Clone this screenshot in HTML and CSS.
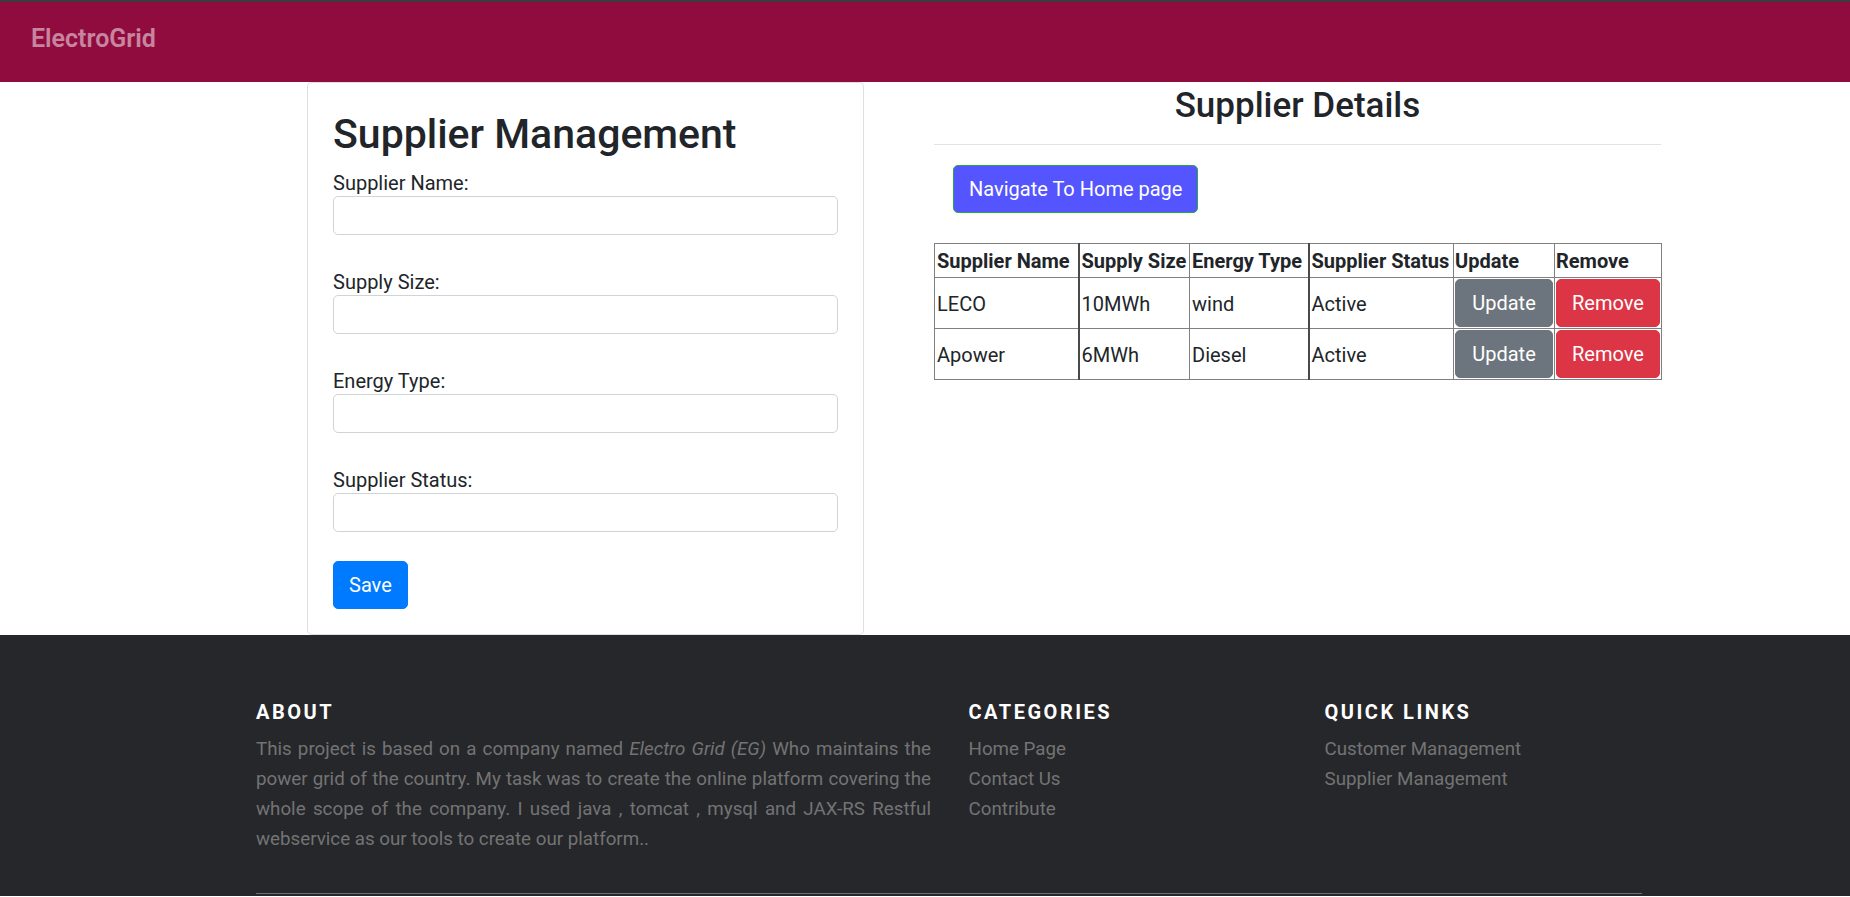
FILE: index.html
```html
<!DOCTYPE html>
<html lang="en">
<head>
<meta charset="utf-8">
<title>Supplier Management - ElectroGrid</title>
<link rel="stylesheet" href="styles.css">
</head>
<body>
<nav class="navbar">
  <a class="brand" href="#">ElectroGrid</a>
</nav>

<main class="main">
  <section class="card">
    <h1 class="card-title">Supplier Management</h1>
    <form class="form">
      <div class="field">
        <label class="label" for="supplierName">Supplier Name:</label>
        <input class="input" id="supplierName" type="text">
      </div>
      <div class="field">
        <label class="label" for="supplySize">Supply Size:</label>
        <input class="input" id="supplySize" type="text">
      </div>
      <div class="field">
        <label class="label" for="energyType">Energy Type:</label>
        <input class="input" id="energyType" type="text">
      </div>
      <div class="field">
        <label class="label" for="supplierStatus">Supplier Status:</label>
        <input class="input" id="supplierStatus" type="text">
      </div>
      <button class="btn btn-primary" type="button">Save</button>
    </form>
  </section>

  <section class="details">
    <h2 class="details-title">Supplier Details</h2>
    <hr class="rule">
    <button class="btn btn-nav" type="button">Navigate To Home page</button>
    <table class="table">
      <colgroup>
        <col class="col-name">
        <col class="col-size">
        <col class="col-type">
        <col class="col-status">
        <col class="col-update">
        <col class="col-remove">
      </colgroup>
      <thead>
        <tr>
          <th>Supplier Name</th>
          <th>Supply Size</th>
          <th>Energy Type</th>
          <th>Supplier Status</th>
          <th>Update</th>
          <th>Remove</th>
        </tr>
      </thead>
      <tbody>
        <tr>
          <td>LECO</td>
          <td>10MWh</td>
          <td>wind</td>
          <td>Active</td>
          <td><button class="btn btn-cell btn-secondary" type="button">Update</button></td>
          <td><button class="btn btn-cell btn-danger" type="button">Remove</button></td>
        </tr>
        <tr>
          <td>Apower</td>
          <td>6MWh</td>
          <td>Diesel</td>
          <td>Active</td>
          <td><button class="btn btn-cell btn-secondary" type="button">Update</button></td>
          <td><button class="btn btn-cell btn-danger" type="button">Remove</button></td>
        </tr>
      </tbody>
    </table>
  </section>
</main>

<footer class="footer">
  <div class="footer-inner">
    <div class="footer-row">
      <div class="footer-col">
        <h6 class="footer-heading">About</h6>
        <p class="footer-about">This project is based on a company named <i>Electro Grid (EG)</i> Who maintains the power grid of the country. My task was to create the online platform covering the whole scope of the company. I used java , tomcat , mysql and JAX-RS Restful webservice as our tools to create our platform..</p>
      </div>
      <div class="footer-col">
        <h6 class="footer-heading">Categories</h6>
        <ul class="footer-links">
          <li><a href="#">Home Page</a></li>
          <li><a href="#">Contact Us</a></li>
          <li><a href="#">Contribute</a></li>
        </ul>
      </div>
      <div class="footer-col">
        <h6 class="footer-heading">Quick Links</h6>
        <ul class="footer-links">
          <li><a href="#">Customer Management</a></li>
          <li><a href="#">Supplier Management</a></li>
        </ul>
      </div>
    </div>
    <hr class="footer-rule">
  </div>
</footer>
</body>
</html>
```

FILE: styles.css
```css
* {
  box-sizing: border-box;
}

html,
body {
  margin: 0;
  padding: 0;
}

body {
  font-family: Roboto, "Liberation Sans", sans-serif;
  font-size: 20px;
  line-height: 1.5;
  color: #212529;
  background: #fff;
  overflow: hidden;
}

/* ---------- Navbar ---------- */
.navbar {
  height: 82px;
  border-top: 2px solid #3c3c3c;
  background: #900c3f;
  display: flex;
  align-items: center;
  padding: 0 0 6px 31px;
}

.brand {
  font-size: 25px;
  font-weight: 600;
  line-height: 1.5;
  color: rgba(255, 255, 255, 0.5);
  text-decoration: none;
}

/* ---------- Main ---------- */
.main {
  display: flex;
  align-items: flex-start;
  padding-left: 307px;
}

.card {
  width: 557px;
  border: 1px solid rgba(0, 0, 0, 0.125);
  border-radius: 5px;
  padding: 25px;
  background: #fff;
}

.card-title {
  margin: 2px 0 8px;
  font-size: 41px;
  font-weight: 500;
  line-height: 48px;
}

.form {
  display: flex;
  flex-direction: column;
  align-items: flex-start;
}

.field {
  width: 100%;
  margin-bottom: 30px;
}

.field:nth-child(4) {
  margin-bottom: 29px;
}

.label {
  display: block;
  font-size: 20px;
  line-height: 34px;
  margin-bottom: -4px;
}

.input {
  display: block;
  position: relative;
  width: 100%;
  height: 39px;
  border: 1px solid #ced4da;
  border-radius: 5px;
  background: #fff;
  font: inherit;
  padding: 0 10px;
}

.btn {
  font-family: inherit;
  font-size: 20px;
  line-height: 30px;
  height: 48px;
  padding: 0 15px;
  border: 1px solid transparent;
  border-radius: 5px;
  color: #fff;
  cursor: pointer;
}

.btn-primary {
  background: #007bff;
  border-color: #007bff;
}

.details {
  width: 727px;
  margin-left: 70px;
}

.details-title {
  margin: 4px 0 0;
  font-size: 35px;
  font-weight: 500;
  line-height: 40px;
  text-align: center;
}

.rule {
  margin: 18px 0 0;
  border: 0;
  border-top: 1px solid #e3e3e3;
}

.btn-nav {
  margin: 20px 0 0 19px;
  background: #5555ff;
  border-color: #28a745;
}

.table {
  margin-top: 30px;
  width: 727px;
  table-layout: fixed;
  border-collapse: collapse;
  font-size: 20px;
}

.col-name { width: 144px; }
.col-size { width: 111px; }
.col-type { width: 119px; }
.col-status { width: 145px; }
.col-update { width: 101px; }
.col-remove { width: 107px; }

.table th,
.table td {
  border: 1px solid #808080;
  padding: 1px 1px 1px 2px;
  text-align: left;
  vertical-align: middle;
  white-space: nowrap;
  overflow: hidden;
}

.table th {
  height: 34px;
  font-weight: 700;
  line-height: 30px;
}

.table td {
  height: 51px;
  line-height: 30px;
  padding-top: 2px;
}

.table tr > :nth-child(2),
.table tr > :nth-child(4) {
  border-left: 2px solid #4a4a4a;
}

.table tr > :nth-child(5),
.table tr > :nth-child(6) {
  padding: 1px;
}

.btn-cell {
  display: block;
  width: 100%;
  padding: 0;
  text-align: center;
}

.btn-secondary {
  background: #6c757d;
  border-color: #6c757d;
}

.btn-danger {
  background: #dc3545;
  border-color: #dc3545;
}

/* ---------- Footer ---------- */
.footer {
  background: #26272b;
  color: #737373;
  font-size: 18.75px;
  line-height: 30px;
  padding: 59px 0 2px;
}

.footer-inner {
  margin-left: 256px;
  width: 1386px;
}

.footer-row {
  display: grid;
  grid-template-columns: 675px 318.5px 1fr;
  column-gap: 37.5px;
  height: 160px;
}

.footer-heading {
  margin: 6px 0 10px;
  font-size: 20px;
  font-weight: 700;
  line-height: 24px;
  letter-spacing: 2.5px;
  text-transform: uppercase;
  color: #fff;
}

.footer-about {
  margin: 0;
  text-align: justify;
}

.footer-links {
  margin: 0;
  padding: 0;
  list-style: none;
}

.footer-links a {
  color: #737373;
  text-decoration: none;
}

.footer-rule {
  margin: 39px 0 0;
  border: 0;
  border-top: 1px solid #707072;
}
```
